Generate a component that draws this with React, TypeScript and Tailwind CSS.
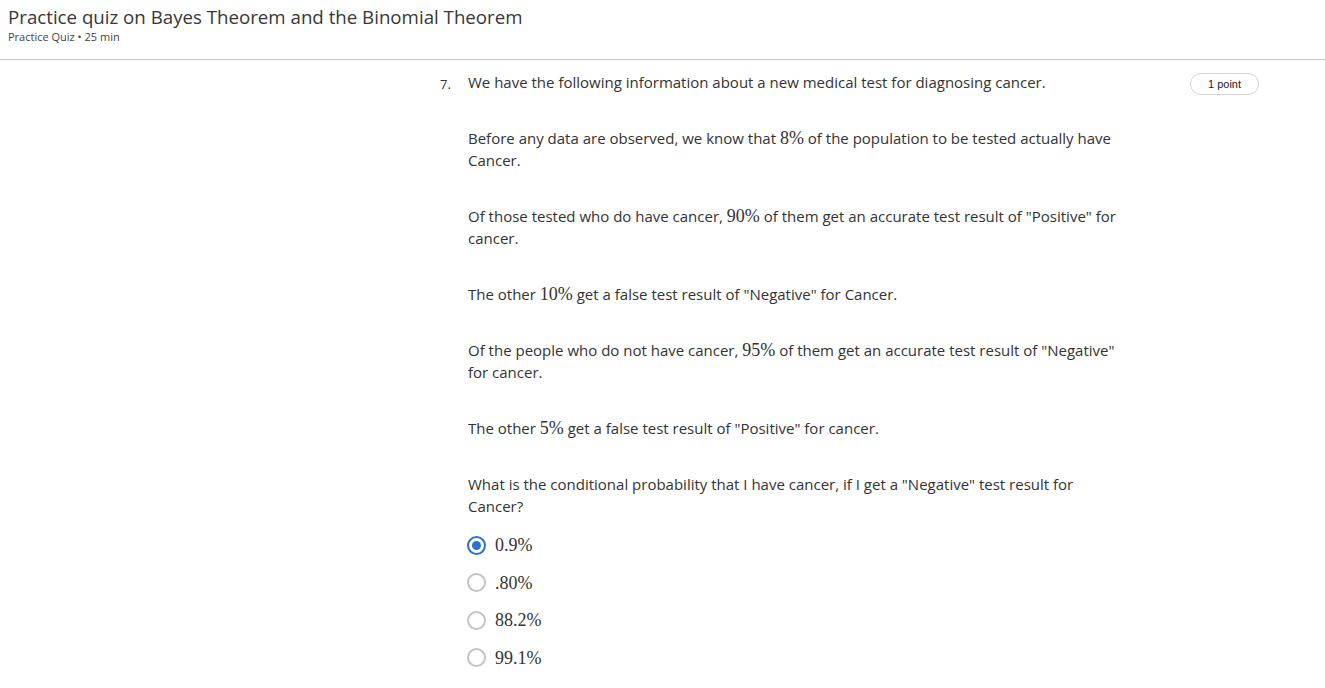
import React from "react";

const M = ({ children }: { children: React.ReactNode }) => (
  <span style={{ fontFamily: '"Liberation Serif", "DejaVu Serif", serif' }} className="text-[18px] leading-none">
    {children}
  </span>
);

function Radio({ checked }: { checked?: boolean }) {
  return checked ? (
    <span className="w-[19px] h-[19px] rounded-full border-2 border-[#2a73cc] flex items-center justify-center shrink-0">
      <span className="w-[9px] h-[9px] rounded-full bg-[#2a73cc]" />
    </span>
  ) : (
    <span className="w-[19px] h-[19px] rounded-full border-2 border-[#c4c4c4] shrink-0" />
  );
}

export default function App() {
  const options = [
    { t: "0.9%", c: true },
    { t: ".80%" },
    { t: "88.2%" },
    { t: "99.1%" },
  ];
  return (
    <div className="w-[1325px] h-[688px] bg-white text-[#333]" style={{ fontFamily: '"Open Sans", sans-serif' }}>
      <div className="h-[60px] border-b border-[#c8c8c8] pl-[8px] pt-[4px]">
        <div className="text-[18.7px] leading-[26px] text-[#373737]">Practice quiz on Bayes Theorem and the Binomial Theorem</div>
        <div className="text-[11px] leading-[14px] text-[#444]">Practice Quiz • 25 min</div>
      </div>
      <div className="flex pt-[11px]">
        <div className="w-[468px] shrink-0 pl-[440px]">
          <span className="text-[13px] leading-[22px] inline-block">7.</span>
        </div>
        <div className="w-[655px] text-[15px] leading-[22px] flex flex-col gap-[34px]">
          <p>We have the following information about a new medical test for diagnosing cancer.</p>
          <p>Before any data are observed, we know that <M>8%</M> of the population to be tested actually have Cancer.</p>
          <p>Of those tested who do have cancer, <M>90%</M> of them get an accurate test result of "Positive" for cancer.</p>
          <p>The other <M>10%</M> get a false test result of "Negative" for Cancer.</p>
          <p>Of the people who do not have cancer, <M>95%</M> of them get an accurate test result of "Negative" for cancer.</p>
          <p>The other <M>5%</M> get a false test result of "Positive" for cancer.</p>
          <div>
            <p>What is the conditional probability that I have cancer, if I get a "Negative" test result for Cancer?</p>
            <div className="flex flex-col gap-[15.5px] mt-[17px]">
              {options.map((o) => (
                <div key={o.t} className="flex items-center gap-[9px] h-[22px] -ml-[1px]">
                  <Radio checked={o.c} />
                  <M>{o.t}</M>
                </div>
              ))}
            </div>
          </div>
        </div>
        <div className="ml-[67px] -mt-[1px]">
          <span className="inline-flex items-center justify-center h-[22px] w-[69px] rounded-full border border-[#d4d4d4] text-[11px] text-[#222]" style={{ fontFamily: '"Liberation Sans", Arial, sans-serif' }}>1 point</span>
        </div>
      </div>
    </div>
  );
}
